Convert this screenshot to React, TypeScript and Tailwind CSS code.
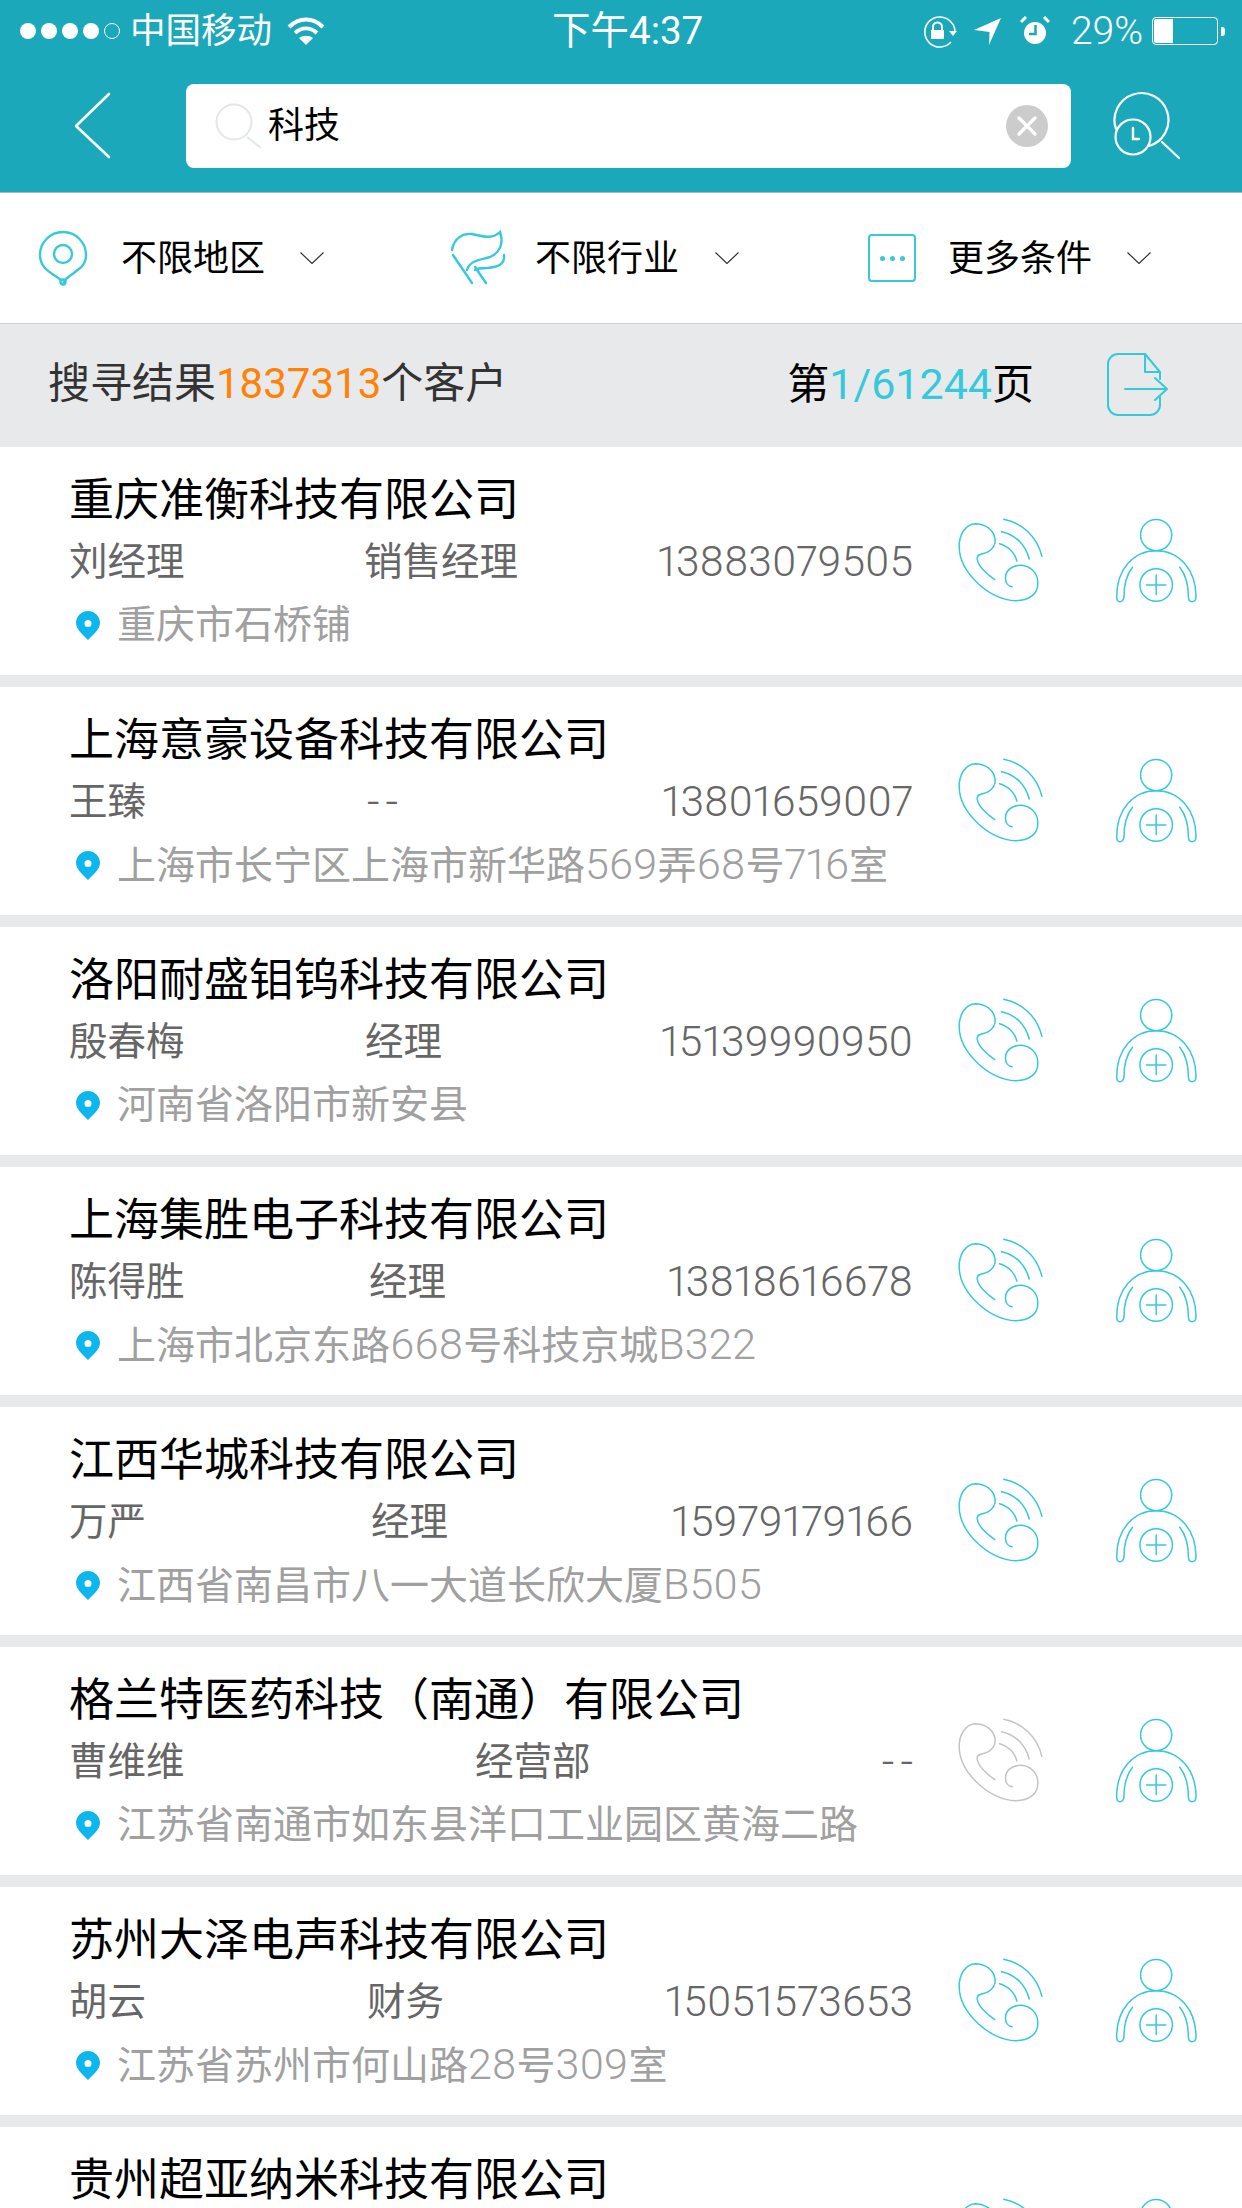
const teal = '#36c9dc';

interface Customer {
  name: string;
  contact: string;
  contactWidth: string;
  title: string;
  phone: string;
  address: string;
  noPhone?: boolean;
}

const customers: Customer[] = [
  { name: '重庆准衡科技有限公司', contact: '刘经理', contactWidth: 'w-[295px]', title: '销售经理', phone: '13883079505', address: '重庆市石桥铺' },
  { name: '上海意豪设备科技有限公司', contact: '王臻', contactWidth: 'w-[298px]', title: '--', phone: '13801659007', address: '上海市长宁区上海市新华路569弄68号716室' },
  { name: '洛阳耐盛钼钨科技有限公司', contact: '殷春梅', contactWidth: 'w-[296px]', title: '经理', phone: '15139990950', address: '河南省洛阳市新安县' },
  { name: '上海集胜电子科技有限公司', contact: '陈得胜', contactWidth: 'w-[300px]', title: '经理', phone: '13818616678', address: '上海市北京东路668号科技京城B322' },
  { name: '江西华城科技有限公司', contact: '万严', contactWidth: 'w-[302px]', title: '经理', phone: '15979179166', address: '江西省南昌市八一大道长欣大厦B505' },
  { name: '格兰特医药科技（南通）有限公司', contact: '曹维维', contactWidth: 'w-[406px]', title: '经营部', phone: '--', address: '江苏省南通市如东县洋口工业园区黄海二路', noPhone: true },
  { name: '苏州大泽电声科技有限公司', contact: '胡云', contactWidth: 'w-[298px]', title: '财务', phone: '15051573653', address: '江苏省苏州市何山路28号309室' },
  { name: '贵州超亚纳米科技有限公司', contact: '', contactWidth: 'w-[295px]', title: '', phone: '', address: '' },
];

const Chevron = () => (
  <svg viewBox="0 0 24 12" className="w-[24px] h-[12px]" fill="none" stroke="#333" strokeWidth="1.2">
    <path d="M0.5 0.5 L12 11.5 L23.5 0.5" />
  </svg>
);

const PhoneIcon = ({ color }: { color: string }) => (
  <svg viewBox="110 85 260 255" className="w-[87px] h-[85px]" fill="none" stroke={color} strokeWidth="4.5" strokeLinecap="round">
    <path d="M223 270 C195 250 170 225 170 205 C170 190 190 195 205 185 C220 175 226 160 223 145 C218 118 190 102 165 102 C135 103 116 135 116 170 C116 250 210 333 285 333 C325 333 352 315 352 280 C352 245 325 227 298 227 C272 227 255 245 255 265 C255 280 263 290 275 291" />
    <path d="M250 89 C305 100 350 140 364 200" />
    <path d="M243 126 C285 135 315 165 326 208" />
    <path d="M237 162 C262 168 283 190 289 214" />
  </svg>
);

const PersonIcon = () => (
  <svg viewBox="585 85 250 255" className="w-[83px] h-[85px]" fill="none" stroke={teal} strokeWidth="4.5" strokeLinecap="round">
    <circle cx="709" cy="136" r="47" />
    <path d="M638 233 C620 255 612 285 612 322 C612 332 605 337 600 337 C593 337 590 330 590 322 C590 240 640 183 709 183 C778 183 829 240 829 322 C829 330 825 337 817 337 C810 337 806 332 806 322 C806 285 798 255 780 233" />
    <circle cx="709" cy="286" r="49" />
    <path d="M680 286 H738 M709 256 V315" />
  </svg>
);

// digits in the reference run wider than the CJK text around them
const Mixed = ({ text }: { text: string }) => (
  <>
    {text.split(/([0-9A-Z]+)/).map((part, i) =>
      /^[0-9A-Z]+$/.test(part)
        ? <span key={i} className="text-[43px] font-light proportional-nums">{part}</span>
        : <span key={i}>{part}</span>
    )}
  </>
);

const Dashable = ({ value, className }: { value: string; className?: string }) => (
  <span className={value === '--' ? 'tracking-[6px] text-[44px] font-light mr-[-6px]' : className}>{value}</span>
);

const CustomerRow = ({ customer }: { customer: Customer }) => (
  <div className="h-[228px] mb-[12px] bg-white flex items-center shrink-0">
    <div className="ml-[69px] w-[844px] h-full pt-[29px]">
      <div className="text-[45px] leading-[50px] text-black whitespace-nowrap">{customer.name}</div>
      <div className="mt-[11px] h-[50px] flex text-[38.5px] leading-[50px] text-[#666] whitespace-nowrap">
        <span className={customer.contactWidth}>{customer.contact}</span>
        <Dashable value={customer.title} />
        <span className="ml-auto">
          <Dashable value={customer.phone} className="text-[42.5px] font-light proportional-nums" />
        </span>
      </div>
      <div className="mt-[13px] h-[50px] flex items-center text-[39px] leading-[50px] text-[#a0a0a0] whitespace-nowrap">
        {customer.address && (
          <svg viewBox="0 0 24 29" className="ml-[7px] w-[24px] h-[29px] mr-[17px]">
            <path fillRule="evenodd" fill="#0db7ee" d="M12 0 A12 12 0 0 1 24 12 C24 18 17 24 12 29 C7 24 0 18 0 12 A12 12 0 0 1 12 0 Z M12 9 A3.5 3.5 0 1 0 12 16 A3.5 3.5 0 1 0 12 9 Z" />
          </svg>
        )}
        <span><Mixed text={customer.address} /></span>
      </div>
    </div>
    <div className="ml-[44px] mb-[2px]">
      <PhoneIcon color={customer.noPhone ? '#c4c4c4' : teal} />
    </div>
    <div className="ml-[71px] mb-[2px]">
      <PersonIcon />
    </div>
  </div>
);

const StatusBar = () => (
  <div className="h-[60px] pt-[2px] flex items-center text-white whitespace-nowrap">
    <div className="ml-[20px] flex items-center gap-[5px]">
      <span className="w-[16px] h-[16px] rounded-full bg-white" />
      <span className="w-[16px] h-[16px] rounded-full bg-white" />
      <span className="w-[16px] h-[16px] rounded-full bg-white" />
      <span className="w-[16px] h-[16px] rounded-full bg-white" />
      <span className="w-[16px] h-[16px] rounded-full border border-white" />
    </div>
    <span className="ml-[10px] text-[35.5px] leading-[40px]">中国移动</span>
    <svg viewBox="288 16 38 28" className="ml-[15px] w-[38px] h-[28px]" fill="none" stroke="#fff" strokeWidth="4">
      <path d="M290 26 C300 16 314 16 324 26" />
      <path d="M296 32 C303 26 311 26 318 32" />
      <path d="M307 44 L300 37 C304 34 310 34 314 37 Z" fill="#fff" stroke="none" />
    </svg>
    <span className="ml-[227px] text-[38.5px] leading-[40px]">下午4:37</span>
    <div className="ml-auto mr-[17px] flex items-center">
      <svg viewBox="922 13 38 34" className="w-[38px] h-[34px]" fill="none" stroke="#fff" strokeWidth="1.6">
        <path d="M952 41 A15 15 0 1 1 952 21 C955 24 956 27 956 31" />
        <path d="M950 30 H958 L954 35 Z" fill="#fff" stroke="none" />
        <rect x="932" y="29" width="13" height="9" fill="#fff" stroke="none" />
        <path d="M934 29 V26 A4.5 4.5 0 0 1 943 26 V29" strokeWidth="2" />
      </svg>
      <svg viewBox="975 18 27 27" className="ml-[15px] w-[27px] h-[27px]" fill="#fff">
        <path d="M975 30 L1002 18 L990 45 L990.5 32 Z" />
      </svg>
      <svg viewBox="1021 16 30 30" className="ml-[19px] w-[30px] h-[30px]">
        <circle cx="1036" cy="33" r="11" fill="#fff" />
        <path d="M1022 22 L1027 17 M1050 22 L1045 17" stroke="#fff" strokeWidth="3" />
        <path d="M1036.5 25 V34 H1030" fill="none" stroke="#1ca8bb" strokeWidth="2.5" />
      </svg>
      <span className="ml-[21px] text-[39px] leading-[40px] font-light">29%</span>
      <div className="ml-[9px] w-[66px] h-[28px] border border-white rounded-[4px] p-px flex">
        <div className="w-[19px] bg-white rounded-l-[2px]" />
      </div>
      <div className="ml-[3px] w-[4px] h-[9px] bg-white rounded-r-[3px]" />
    </div>
  </div>
);

const NavBar = () => (
  <div className="h-[132px] flex items-start">
    <svg viewBox="72 90 42 70" className="ml-[72px] mt-[30px] w-[42px] h-[70px]" fill="none" stroke="#fff" strokeWidth="2.6" strokeLinecap="round" strokeLinejoin="round">
      <path d="M109 94 L76 126 L109 157" />
    </svg>
    <div className="ml-[72px] mt-[24px] w-[885px] h-[84px] bg-white rounded-[8px] flex items-center">
      <svg viewBox="214 103 50 50" className="ml-[28px] w-[50px] h-[50px]" fill="none" stroke="#e3e7e7" strokeWidth="2">
        <circle cx="234" cy="124" r="17.5" />
        <path d="M247 139 L261 150" />
      </svg>
      <span className="ml-[4px] text-[36px] leading-[40px] text-black">科技</span>
      <div className="ml-auto mr-[23px] w-[42px] h-[42px] rounded-full bg-[#cccccc] flex items-center justify-center">
        <svg viewBox="0 0 20 20" className="w-[20px] h-[20px]" stroke="#fff" strokeWidth="3.2" strokeLinecap="round">
          <path d="M2 2 L18 18 M18 2 L2 18" />
        </svg>
      </div>
    </div>
    <svg viewBox="1112 90 70 70" className="ml-[41px] mt-[30px] w-[70px] h-[70px]" fill="none" stroke="#fff" strokeWidth="2.2" strokeLinecap="round">
      <path d="M1116 129 A27 27 0 1 1 1149 146" />
      <circle cx="1133" cy="137" r="17.5" />
      <path d="M1133 128 V139 H1139" strokeWidth="2.4" />
      <path d="M1162 142 L1179 158" />
    </svg>
  </div>
);

const FilterBar = () => (
  <div className="h-[131px] bg-white border-b border-[#cfd0d2] flex items-center text-[36px] leading-[40px] text-black">
    <svg viewBox="37 229 52 58" className="ml-[37px] w-[52px] h-[58px]" fill="none" stroke={teal} strokeWidth="2.4">
      <path d="M61 280 C50 272 40 268 40 255 A23 23 0 0 1 86 255 C86 268 76 270 66 279 L63 283" />
      <circle cx="63" cy="254" r="9" />
      <circle cx="63" cy="282" r="2.5" />
    </svg>
    <span className="ml-[32px] pt-[2px]">不限地区</span>
    <span className="ml-[35px]"><Chevron /></span>
    <svg viewBox="447 230 58 56" className="ml-[125px] w-[58px] h-[56px]" fill="none" stroke={teal} strokeWidth="2.4" strokeLinecap="round">
      <path d="M450 250 C452 238 461 233 470 234 C480 236 490 240 498 232 C502 243 498 253 488 257 C478 260 468 260 465 270" />
      <path d="M502 255 C503 264 497 267 485 268 C478 268 474 269 473 270" />
      <path d="M451 255 L470 283 M473 267 L484 283" />
    </svg>
    <span className="ml-[28px] pt-[2px]">不限行业</span>
    <span className="ml-[36px]"><Chevron /></span>
    <div className="ml-[129px] w-[48px] h-[48px] border-2 border-[#36c9dc] rounded-[4px] flex items-center justify-center gap-[5px]">
      <span className="w-[5px] h-[5px] rounded-full bg-[#36c9dc]" />
      <span className="w-[5px] h-[5px] rounded-full bg-[#36c9dc]" />
      <span className="w-[5px] h-[5px] rounded-full bg-[#36c9dc]" />
    </div>
    <span className="ml-[32px] pt-[2px]">更多条件</span>
    <span className="ml-[35px]"><Chevron /></span>
  </div>
);

const SummaryBar = () => (
  <div className="h-[123px] pb-[3px] flex items-center text-[42px] leading-[50px] whitespace-nowrap">
    <span className="ml-[48px] text-[#333]">搜寻结果<span className="text-[#ff8208] text-[42px]">1837313</span>个客户</span>
    <span className="ml-[280px] text-black">第<span className="text-[#36c9dc] text-[43px]">1/61244</span>页</span>
    <svg viewBox="1105 350 65 68" className="ml-[71px] w-[65px] h-[68px]" fill="none" stroke={teal} strokeWidth="2" strokeLinecap="round" strokeLinejoin="round">
      <path d="M1145 354 H1118 A10 10 0 0 0 1108 364 V405 A10 10 0 0 0 1118 415 H1150 A10 10 0 0 0 1160 405 V397" />
      <path d="M1145 354 L1160 372 V379 M1145 354 V372 H1160" />
      <path d="M1125 389 H1167 M1155 378 L1167 389 L1155 400" />
    </svg>
  </div>
);

export default function App() {
  return (
    <div className="w-[1242px] h-[2208px] overflow-hidden bg-[#e8e9eb] font-[Roboto,'Noto_Sans_CJK_SC',sans-serif]">
      <div className="bg-[#1ca8bb] border-b border-[#b0b4b6]">
        <StatusBar />
        <NavBar />
      </div>
      <FilterBar />
      <SummaryBar />
      {customers.map(customer => (
        <CustomerRow key={customer.name} customer={customer} />
      ))}
    </div>
  );
}
